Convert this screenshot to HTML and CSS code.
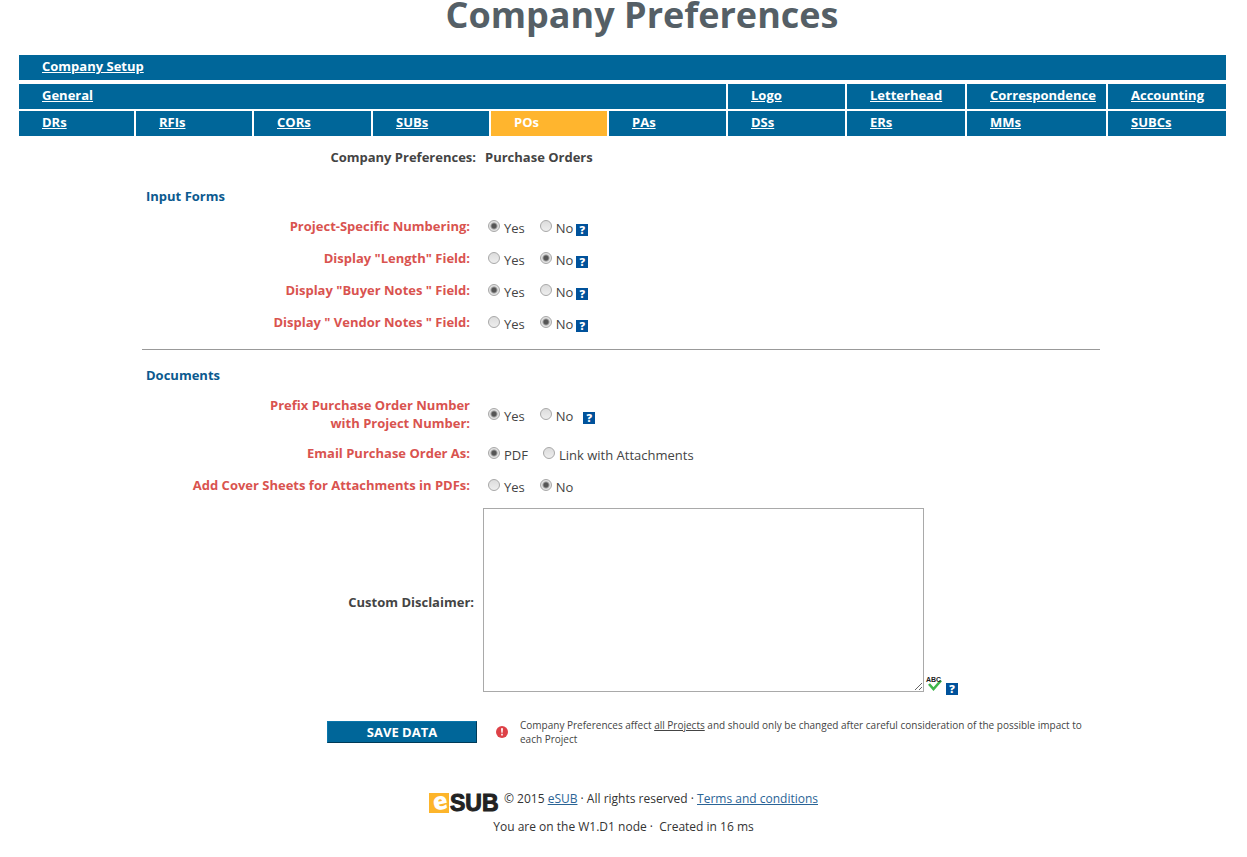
FILE: index.html
```html
<!DOCTYPE html>
<html lang="en">
<head>
<meta charset="utf-8">
<meta name="viewport" content="width=device-width, initial-scale=1">
<title>Company Preferences</title>
<link rel="stylesheet" href="styles.css">
</head>
<body>
<h1 class="page-title">Company Preferences</h1>

<nav class="tabs" aria-label="Company setup">
  <a class="tab tab-setup" href="#">Company Setup</a>
  <a class="tab tab-general" href="#">General</a>
  <a class="tab" href="#">Logo</a>
  <a class="tab" href="#">Letterhead</a>
  <a class="tab" href="#">Correspondence</a>
  <a class="tab" href="#">Accounting</a>
  <a class="tab" href="#">DRs</a>
  <a class="tab" href="#">RFIs</a>
  <a class="tab" href="#">CORs</a>
  <a class="tab" href="#">SUBs</a>
  <a class="tab tab-active" href="#" aria-current="page">POs</a>
  <a class="tab" href="#">PAs</a>
  <a class="tab" href="#">DSs</a>
  <a class="tab" href="#">ERs</a>
  <a class="tab" href="#">MMs</a>
  <a class="tab" href="#">SUBCs</a>
</nav>

<form class="prefs">
  <div class="crumb">
    <span class="crumb-label">Company Preferences:</span>
    <span>Purchase Orders</span>
  </div>

  <h2 class="section-title">Input Forms</h2>
  <div class="row" role="radiogroup" aria-labelledby="l-num">
    <span class="row-label" id="l-num">Project-Specific Numbering:</span>
    <div class="options">
      <label class="option"><input class="radio" type="radio" name="num" checked>Yes</label>
      <label class="option"><input class="radio" type="radio" name="num">No</label>
      <button class="help" type="button" aria-label="Help">?</button>
    </div>
  </div>
  <div class="row" role="radiogroup" aria-labelledby="l-len">
    <span class="row-label" id="l-len">Display "Length" Field:</span>
    <div class="options">
      <label class="option"><input class="radio" type="radio" name="len">Yes</label>
      <label class="option"><input class="radio" type="radio" name="len" checked>No</label>
      <button class="help" type="button" aria-label="Help">?</button>
    </div>
  </div>
  <div class="row" role="radiogroup" aria-labelledby="l-buyer">
    <span class="row-label" id="l-buyer">Display "Buyer Notes " Field:</span>
    <div class="options">
      <label class="option"><input class="radio" type="radio" name="buyer" checked>Yes</label>
      <label class="option"><input class="radio" type="radio" name="buyer">No</label>
      <button class="help" type="button" aria-label="Help">?</button>
    </div>
  </div>
  <div class="row" role="radiogroup" aria-labelledby="l-vendor">
    <span class="row-label" id="l-vendor">Display " Vendor Notes " Field:</span>
    <div class="options">
      <label class="option"><input class="radio" type="radio" name="vendor">Yes</label>
      <label class="option"><input class="radio" type="radio" name="vendor" checked>No</label>
      <button class="help" type="button" aria-label="Help">?</button>
    </div>
  </div>

  <hr class="rule">

  <h2 class="section-title">Documents</h2>
  <div class="row row-double" role="radiogroup" aria-labelledby="l-prefix">
    <span class="row-label" id="l-prefix">Prefix Purchase Order Number<br>with Project Number:</span>
    <div class="options">
      <label class="option"><input class="radio" type="radio" name="prefix" checked>Yes</label>
      <label class="option"><input class="radio" type="radio" name="prefix">No</label>
      <button class="help help-spaced" type="button" aria-label="Help">?</button>
    </div>
  </div>
  <div class="row" role="radiogroup" aria-labelledby="l-email">
    <span class="row-label" id="l-email">Email Purchase Order As:</span>
    <div class="options">
      <label class="option"><input class="radio" type="radio" name="email" checked>PDF</label>
      <label class="option"><input class="radio" type="radio" name="email">Link with Attachments</label>
    </div>
  </div>
  <div class="row" role="radiogroup" aria-labelledby="l-cover">
    <span class="row-label" id="l-cover">Add Cover Sheets for Attachments in PDFs:</span>
    <div class="options">
      <label class="option"><input class="radio" type="radio" name="cover">Yes</label>
      <label class="option"><input class="radio" type="radio" name="cover" checked>No</label>
    </div>
  </div>

  <div class="disclaimer">
    <label class="disclaimer-label" for="disclaimer">Custom Disclaimer:</label>
    <textarea class="disclaimer-box" id="disclaimer"></textarea>
    <div class="disclaimer-tools">
      <button class="spell" type="button" aria-label="Check spelling">
        <svg class="spell-icon" viewBox="0 0 16 15" aria-hidden="true">
          <path d="M3 8 L7.5 13 L15 4.500" fill="none" stroke="#3fb54a" stroke-width="2.600"/>
          <text class="spell-text" x="0" y="6">ABC</text>
        </svg>
      </button>
      <button class="help" type="button" aria-label="Help">?</button>
    </div>
  </div>

  <div class="actions">
    <button class="save" type="submit">SAVE DATA</button>
    <svg class="alert" viewBox="0 0 12 12" aria-hidden="true">
      <circle cx="6" cy="6" r="6" fill="#dd4147"/>
      <path d="M5 2.300h2l-.4 4.400h-1.200zM5.200 7.800h1.600v1.600h-1.600z" fill="#fff"/>
    </svg>
    <p class="notice">Company Preferences affect <u>all Projects</u> and should only be changed after careful consideration of the possible impact to each Project</p>
  </div>
</form>

<footer class="footer">
  <div class="footer-top">
    <svg class="logo" viewBox="0 0 69 21" role="img" aria-label="eSUB">
      <rect width="20" height="20" fill="#fdb52b"/>
      <text class="logo-e" x="4" y="17" transform="rotate(-12 10 10)">e</text>
      <text class="logo-sub" x="21" y="18">SUB</text>
    </svg>
    <p class="legal">© 2015 <a class="link" href="#">eSUB</a> · All rights reserved · <a class="link" href="#">Terms and conditions</a></p>
  </div>
  <p class="node">You are on the W1.D1 node ·&nbsp; Created in 16 ms</p>
</footer>
</body>
</html>
```
FILE: styles.css
```css
* { box-sizing: border-box; }

body {
  margin: 0 21px 0 19px;
  background: #fff;
  color: #444;
  font: 13px/18px "Open Sans", sans-serif;
}

.page-title {
  margin: 0 0 25px;
  padding-left: 39px;
  color: #555f66;
  font-size: 36px;
  line-height: 30px;
  font-weight: 700;
  text-align: center;
}

.tabs {
  display: grid;
  grid-template-columns: 115fr 116fr 117fr 116fr 116fr 117fr 117fr 118fr 139fr 118fr;
  gap: 2px;
}
.tab {
  min-width: 0;
  padding: 2px 0 5px 23px;
  background: #069;
  color: #fff;
  font-weight: 700;
}
.tab-setup { grid-column: 1 / -1; margin-bottom: 2px; }
.tab-general { grid-column: span 6; }
.tab-active { background: #ffb52e; text-decoration: none; }

.prefs { padding: 12px 126px 0 123px; }
.crumb { display: flex; gap: 9px; font-weight: 700; }
.crumb-label { flex: 0 0 334px; text-align: right; }

.section-title {
  margin: 21px 0 5px 4px;
  color: #0b5a8f;
  font-size: 13px;
  line-height: 18px;
  font-weight: 700;
}

.row { display: flex; align-items: center; gap: 18px; padding: 7px 0; }
.row-double { padding: 5px 0; }
.row-label {
  flex: 0 0 328px;
  color: #d9534f;
  font-weight: 700;
  text-align: right;
}
.options { display: flex; align-items: center; height: 18px; padding-top: 4px; }
.option { display: flex; align-items: center; margin-right: 15px; }
.option:has(+ .help) { margin-right: 3px; }
.radio {
  appearance: none;
  width: 12px;
  height: 12px;
  margin: 0 4px 5px 0;
  border: 1px solid #a8a8a8;
  border-radius: 50%;
  background: linear-gradient(#dcdcdc, #eee);
}
.radio:checked { background: radial-gradient(circle, #555 0 2px, #e2e2e2 4px); }

.help {
  width: 12px;
  height: 12px;
  margin: 4px 0 0;
  padding: 0;
  border: 0;
  background: #00529b;
  color: #fff;
  font: 800 11px/12px "Open Sans", sans-serif;
}
.help-spaced { margin-left: 7px; }

.rule { height: 1px; margin: 11px 0 0; border: 0; background: #999; }
.rule + .section-title { margin-top: 16px; margin-bottom: 7px; }

.disclaimer { display: flex; align-items: center; margin-top: 7px; }
.disclaimer-label { flex: 0 0 332px; margin-right: 9px; padding-top: 4px; font-weight: 700; text-align: right; }
.disclaimer-box {
  width: 441px;
  height: 184px;
  margin: 0;
  border: 1px solid #a9a9a9;
  background: #fff;
  font: inherit;
}
.disclaimer-tools { display: flex; align-self: flex-end; align-items: flex-end; gap: 4px; padding-left: 2px; margin-bottom: -3px; }
.spell { width: 16px; height: 15px; margin-bottom: 4px; padding: 0; border: 0; background: none; }
.spell-icon { display: block; width: 16px; height: 15px; overflow: visible; }
.spell-text { fill: #222; font: 700 7px "Liberation Sans", sans-serif; }

.actions { display: flex; align-items: center; margin-top: 26px; padding-left: 185px; }
.save {
  flex: 0 0 150px;
  height: 22px;
  padding: 0;
  border: 1px solid #00517a;
  border-color: #0a76ab #003a57 #003a57 #0a76ab;
  background: #069;
  color: #fff;
  font: 700 13px/20px "Open Sans", sans-serif;
}
.alert { flex: 0 0 12px; height: 12px; margin: 0 12px 0 19px; }
.notice { margin: 0; font-size: 10px; line-height: 14px; }

.footer { margin-top: 44px; padding-left: 2px; font-size: 12px; text-align: center; }
.footer-top { display: flex; justify-content: center; gap: 6px; }
.logo { width: 69px; height: 21px; margin-top: 3px; overflow: visible; }
.logo-e { fill: #fff; font: 800 24px "Open Sans", sans-serif; }
.logo-sub { fill: #222; stroke: #222; stroke-width: 1px; font: 700 23px "Liberation Sans", sans-serif; }
.legal, .node { margin: 0; }
.legal { color: #333; }
.node { margin-top: 4px; color: #333; }
.link { color: #2a6496; }
```
